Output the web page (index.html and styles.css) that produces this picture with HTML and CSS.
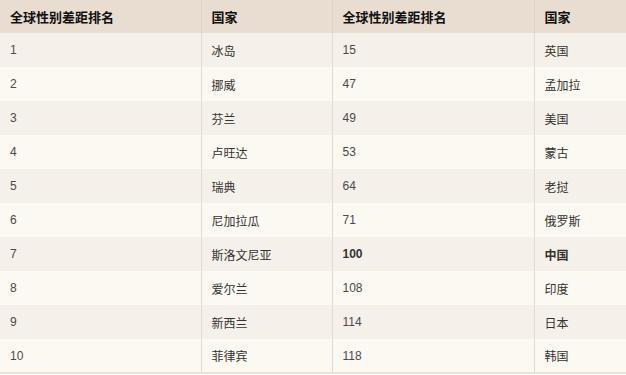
FILE: index.html
```html
<!DOCTYPE html>
<html lang="zh">
<head>
<meta charset="utf-8">
<link rel="stylesheet" href="styles.css">
</head>
<body>
<table class="rank">
  <colgroup>
    <col class="c1"><col class="c2"><col class="c3"><col class="c4">
  </colgroup>
  <thead>
    <tr><th>全球性别差距排名</th><th>国家</th><th>全球性别差距排名</th><th>国家</th></tr>
  </thead>
  <tbody>
    <tr><td>1</td><td>冰岛</td><td>15</td><td>英国</td></tr>
    <tr><td>2</td><td>挪威</td><td>47</td><td>孟加拉</td></tr>
    <tr><td>3</td><td>芬兰</td><td>49</td><td>美国</td></tr>
    <tr><td>4</td><td>卢旺达</td><td>53</td><td>蒙古</td></tr>
    <tr><td>5</td><td>瑞典</td><td>64</td><td>老挝</td></tr>
    <tr><td>6</td><td>尼加拉瓜</td><td>71</td><td>俄罗斯</td></tr>
    <tr><td>7</td><td>斯洛文尼亚</td><td class="strong">100</td><td class="strong">中国</td></tr>
    <tr><td>8</td><td>爱尔兰</td><td>108</td><td>印度</td></tr>
    <tr><td>9</td><td>新西兰</td><td>114</td><td>日本</td></tr>
    <tr><td>10</td><td>菲律宾</td><td>118</td><td>韩国</td></tr>
  </tbody>
</table>
</body>
</html>
```

FILE: styles.css
```css
html, body {
  margin: 0;
  padding: 0;
  background: #ffffff;
}
.rank {
  width: 626px;
  border-collapse: collapse;
  table-layout: fixed;
  font-family: "Liberation Sans", Arial, "Noto Sans CJK SC", sans-serif;
  font-size: 12px;
  color: #333333;
  border-bottom: 2px solid #ebe3d7;
}
.c1 { width: 201px; }
.c2 { width: 131px; }
.c3 { width: 202px; }
.c4 { width: 92px; }
.rank th {
  background: #e8ddd0;
  color: #111111;
  font-size: 13px;
  font-weight: bold;
  text-align: left;
  height: 33px;
  padding: 0 10px;
  box-sizing: border-box;
  border-left: 1px solid #dcd2c5;
}
.rank td {
  height: 34px;
  padding: 0 10px;
  box-sizing: border-box;
  border-left: 1px solid #e2dbd1;
}
.rank th:first-child, .rank td:first-child {
  border-left: none;
}
.rank tbody tr:nth-child(odd) { background: #f5f1ea; }
.rank tbody tr:nth-child(even) { background: #fcf8f2; }
.rank td:nth-child(odd) { color: #4a4a4a; }
.rank td.strong { font-weight: bold; color: #333333; }
```
